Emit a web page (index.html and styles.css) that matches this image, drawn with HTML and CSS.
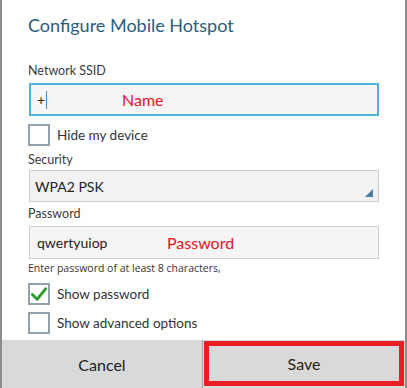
FILE: index.html
```html
<!DOCTYPE html>
<html lang="en">
<head>
    <meta charset="UTF-8">
    <meta name="viewport" content="width=device-width, initial-scale=1.0">
    <title>Configure Mobile Hotspot</title>
    <link rel="stylesheet" href="styles.css">
</head>
<body>
    <div class="dialog">
        <div class="content">
            <h1 class="title">Configure Mobile Hotspot</h1>

            <div class="label label-first">Network SSID</div>
            <div class="field field-active">
                <span class="value">+</span><span class="caret"></span>
                <span class="note note-name">Name</span>
            </div>

            <div class="check-row check-first">
                <span class="box"></span>
                <span class="check-text">Hide my device</span>
            </div>

            <div class="label label-security">Security</div>
            <div class="select">
                <span class="value">WPA2 PSK</span>
                <span class="corner"></span>
            </div>

            <div class="label label-password">Password</div>
            <div class="field">
                <span class="value">qwertyuiop</span>
                <span class="note note-password">Password</span>
            </div>

            <div class="hint">Enter password of at least 8 characters,</div>

            <div class="check-row check-show">
                <span class="box">
                    <svg width="19" height="19" viewBox="0 0 19 19">
                        <path d="M2.5 9.5 L7.5 14.5 L16.5 3.5" fill="none" stroke="#2a9d2a" stroke-width="3" stroke-linecap="round" stroke-linejoin="round"/>
                    </svg>
                </span>
                <span class="check-text">Show password</span>
            </div>

            <div class="check-row check-advanced">
                <span class="box"></span>
                <span class="check-text">Show advanced options</span>
            </div>
        </div>

        <div class="buttons">
            <div class="btn btn-cancel">Cancel</div>
            <div class="btn btn-save">Save</div>
        </div>
    </div>
</body>
</html>
```

FILE: styles.css
```css
* {
    margin: 0;
    padding: 0;
    box-sizing: border-box;
}

body {
    font-family: Lato, 'Open Sans', sans-serif;
    background: #ffffff;
    color: #333333;
}

.dialog {
    width: 407px;
    height: 388px;
    border-left: 2px solid #8c8c8c;
    border-right: 2px solid #8c8c8c;
    display: flex;
    flex-direction: column;
    background: #ffffff;
}

.content {
    padding: 13px 25px 0 26px;
}

.title {
    font-size: 18px;
    font-weight: normal;
    line-height: 24px;
    color: #2b5d7d;
}

.label {
    font-size: 12.5px;
    line-height: 16px;
    color: #3a3a3a;
}

.label-first { margin-top: 26px; }
.label-security { margin-top: 6px; }
.label-password { margin-top: 4px; }

.field,
.select {
    position: relative;
    margin-top: 4px;
    margin-left: 1px;
    width: 350px;
    height: 33px;
    background: #f5f5f5;
    border: 1px solid #cfcfcf;
    display: flex;
    align-items: center;
    padding-left: 7px;
    font-size: 14px;
    color: #222222;
}

.field-active {
    border: 2px solid #4fb3dc;
    padding-left: 6px;
}

.select {
    margin-top: 2px;
    height: 32px;
    background: #f2f2f2;
    padding-left: 5px;
}

.caret {
    display: inline-block;
    width: 1px;
    height: 18px;
    background: #3a8fd0;
    margin-left: 1px;
}

.note {
    position: absolute;
    font-size: 16px;
    color: #e8141e;
}

.note-name { left: 91px; }
.note-password { left: 137px; }

.corner {
    position: absolute;
    right: 5px;
    bottom: 4px;
    width: 0;
    height: 0;
    border-left: 8px solid transparent;
    border-bottom: 8px solid #4f7aa3;
}

.check-row {
    display: flex;
    align-items: center;
    height: 22px;
    font-size: 13.5px;
    color: #333333;
}

.check-first { margin-top: 8px; }
.check-show { margin-top: 9px; }
.check-advanced { margin-top: 7px; }

.box {
    width: 22px;
    height: 22px;
    border: 2px solid #93a1ae;
    display: flex;
    align-items: center;
    justify-content: center;
    margin-right: 7px;
}

.hint {
    margin-top: 3px;
    font-family: 'Open Sans', sans-serif;
    font-size: 10.5px;
    line-height: 12px;
    color: #333333;
}

.buttons {
    margin-top: auto;
    height: 48px;
    background: #d9d9d9;
    display: flex;
}

.btn {
    display: flex;
    align-items: center;
    justify-content: center;
    font-size: 16px;
    color: #222222;
}

.btn-cancel {
    width: 201px;
    border-right: 1px solid #a8a8a8;
}

.btn-save {
    flex: 1;
    margin: 1px 1px 2px 1px;
    border: 5px solid #ed1c24;
}
```
